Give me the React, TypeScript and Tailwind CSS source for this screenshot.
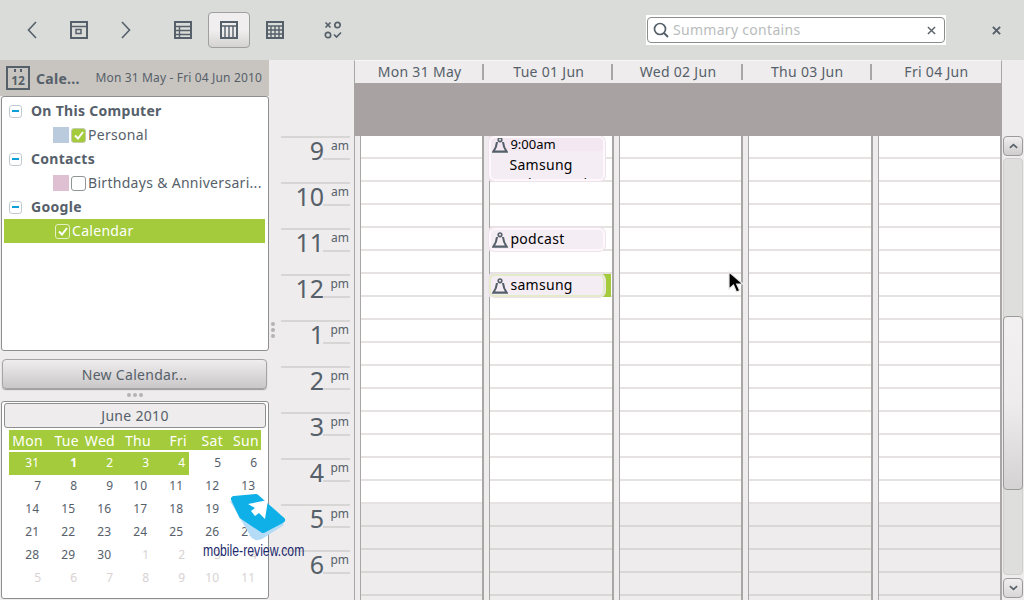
const ink = '#56606a'

const hours = [
  ['9', 'am'], ['10', 'am'], ['11', 'am'], ['12', 'pm'], ['1', 'pm'],
  ['2', 'pm'], ['3', 'pm'], ['4', 'pm'], ['5', 'pm'], ['6', 'pm'],
]

const days = ['Mon 31 May', 'Tue 01 Jun', 'Wed 02 Jun', 'Thu 03 Jun', 'Fri 04 Jun']
const weekdays = ['Mon', 'Tue', 'Wed', 'Thu', 'Fri', 'Sat', 'Sun']

const weeks = [
  [31, 1, 2, 3, 4, 5, 6],
  [7, 8, 9, 10, 11, 12, 13],
  [14, 15, 16, 17, 18, 19, 20],
  [21, 22, 23, 24, 25, 26, 27],
  [28, 29, 30, 1, 2, 3, 4],
  [5, 6, 7, 8, 9, 10, 11],
]

function Icon({ children, className }: { children: React.ReactNode; className?: string }) {
  return (
    <svg viewBox="0 0 18 18" fill="none" stroke={ink} strokeWidth="2" className={className ?? 'w-[18px] h-[18px]'}>
      {children}
    </svg>
  )
}

function Toolbar() {
  return (
    <div className="flex items-center h-[60px] bg-[#dadcd9] shrink-0 relative">
      <div className="flex items-center w-[46px] justify-end pr-[9px]">
        <svg viewBox="0 0 10 18" fill="none" stroke={ink} strokeWidth="1.6" className="w-[10px] h-[18px]">
          <path d="M9 1 1.5 9 9 17" />
        </svg>
      </div>
      <Icon className="w-[18px] h-[18px] ml-[24px]">
        <path d="M1 1h16v16H1z" />
        <path d="M1 5.5h16" strokeWidth="1.5" />
        <path d="M6 8.5h5v4H6z" strokeWidth="1.5" />
      </Icon>
      <svg viewBox="0 0 10 18" fill="none" stroke={ink} strokeWidth="1.6" className="w-[10px] h-[18px] ml-[33px]">
        <path d="M1 1l7.5 8L1 17" />
      </svg>
      <Icon className="w-[18px] h-[18px] ml-[43px]">
        <path d="M1 1h16v16H1z" />
        <path d="M1 5.5h16M1 9.5h16M1 13.5h16M5.5 5v12" strokeWidth="1.4" />
      </Icon>
      <div className="flex items-center justify-center w-[42px] h-[36px] ml-[16px] rounded-[4px] border border-[#9da09f] bg-gradient-to-b from-[#f0eeee] via-[#f0eeee] to-[#d5d2d2]">
        <Icon>
          <path d="M1 1h16v16H1z" />
          <path d="M1 5h16M5 5v12M9 5v12M13 5v12" strokeWidth="1.4" />
        </Icon>
      </div>
      <Icon className="w-[18px] h-[18px] ml-[16px]">
        <path d="M1 1h16v16H1z" />
        <path d="M1 5h16M1 9h16M1 13h16M5 5v12M9 5v12M13 5v12" strokeWidth="1.4" />
      </Icon>
      <svg viewBox="0 0 18 18" fill="none" stroke={ink} strokeWidth="1.7" className="w-[18px] h-[18px] ml-[40px]">
        <path d="M1.5 1.5l5 5M6.5 1.5l-5 5" />
        <circle cx="13.5" cy="4" r="2.7" />
        <circle cx="4" cy="14" r="2.7" />
        <path d="M10 13.5l2.5 2.5 4.5-4.5" />
      </svg>

      <div className="ml-[304px] w-[300px] h-[30px] bg-white flex items-center px-[1px]">
        <div className="flex items-center w-full h-[26px] rounded-[4px] border border-[#8a8d8c] pl-[5px] pr-[8px]">
          <svg viewBox="0 0 16 16" fill="none" stroke={ink} strokeWidth="1.7" className="w-[16px] h-[16px] shrink-0">
            <circle cx="7" cy="7" r="5.5" />
            <path d="M11 11l4 4" strokeWidth="2" />
          </svg>
          <span className="ml-[4px] text-[14px] text-[#b9bcbc] flex-1 leading-none">Summary contains</span>
          <svg viewBox="0 0 10 10" stroke="#5c6469" strokeWidth="1.6" className="w-[9px] h-[9px]">
            <path d="M1 1l8 8M9 1l-8 8" />
          </svg>
        </div>
      </div>
      <svg viewBox="0 0 10 10" stroke={ink} strokeWidth="2.2" className="w-[9px] h-[9px] ml-[46px]">
        <path d="M1 1l8 8M9 1l-8 8" />
      </svg>
    </div>
  )
}

function Expander() {
  return (
    <span className="flex items-center justify-center w-[13px] h-[13px] rounded-[3px] border border-[#c4cbd0] bg-white ml-[5px] shrink-0">
      <span className="w-[7px] h-[2px] bg-[#0d9fd6]" />
    </span>
  )
}

function Check({ on, tone }: { on?: boolean; tone: 'green' | 'plain' | 'selected' }) {
  const cls =
    tone === 'green'
      ? 'bg-[#a3cb3b] border-[#c4cdb0]'
      : tone === 'selected'
        ? 'bg-[#a3cb3b] border-[#e6f0c8]'
        : 'bg-white border-[#8f9496]'
  return (
    <span className={`flex items-center justify-center w-[15px] h-[15px] rounded-[3px] border shrink-0 ${cls}`}>
      {on && (
        <svg viewBox="0 0 12 12" fill="none" stroke="#fff" strokeWidth="2" className="w-[12px] h-[12px]">
          <path d="M2 6.5l3 3 5-6.5" />
        </svg>
      )}
    </span>
  )
}

function GroupRow({ label }: { label: string }) {
  return (
    <div className="flex items-center h-[24px]">
      <Expander />
      <span className="ml-[9px] pb-[2px] font-bold text-[14px] text-[#56606a]">{label}</span>
    </div>
  )
}

function Sidebar() {
  return (
    <div className="w-[269px] shrink-0 flex flex-col">
      <div className="flex items-center h-[36px] bg-[#c8c5c0] text-[#56606a] pl-[6px]">
        <div className="relative w-[24px] h-[24px] border-2 border-[#56606a] flex items-center justify-center font-bold text-[12px] tracking-normal leading-none pt-[5px]">
          12
          <span className="absolute left-[6px] top-[1px] w-[2px] h-[3px] bg-[#56606a]" />
          <span className="absolute left-[12px] top-[1px] w-[2px] h-[3px] bg-[#56606a]" />
        </div>
        <span className="ml-[6px] font-bold text-[14px]">Cale...</span>
        <span className="ml-auto pr-[7px] text-[12px] tracking-[0.15px]">Mon 31 May - Fri 04 Jun 2010</span>
      </div>

      <div className="ml-[1px] w-[268px] h-[255px] rounded-[3px] border border-[#8d8f90] bg-white pl-[2px] pr-[3px] pt-[2px] text-[14px] text-[#56606a]">
        <GroupRow label="On This Computer" />
        <div className="flex items-center h-[24px] pl-[49px]">
          <span className="w-[16px] h-[16px] bg-[#b9cbdd]" />
          <span className="ml-[2px]"><Check on tone="green" /></span>
          <span className="ml-[2px] pb-[2px]">Personal</span>
        </div>
        <GroupRow label="Contacts" />
        <div className="flex items-center h-[24px] pl-[49px]">
          <span className="w-[16px] h-[16px] bg-[#dfbfd2]" />
          <span className="ml-[2px]"><Check tone="plain" /></span>
          <span className="ml-[2px] pb-[2px] whitespace-nowrap">Birthdays &amp; Anniversari...</span>
        </div>
        <GroupRow label="Google" />
        <div className="flex items-center h-[24px] pl-[51px] bg-[#a3cb3b] text-white">
          <Check on tone="selected" />
          <span className="ml-[2px] pb-[2px]">Calendar</span>
        </div>
      </div>

      <button className="ml-[2px] mt-[8px] w-[265px] h-[30px] rounded-[4px] border border-[#a3a5a5] bg-gradient-to-b from-[#efeded] to-[#c9c7c7] shadow-[0_1px_1px_#9a9a9a] text-[14px] text-[#56606a]">
        New Calendar...
      </button>

      <div className="flex justify-center gap-[2px] h-[12px] items-center">
        <span className="w-[4px] h-[4px] rounded-full bg-[#b5b3b3]" />
        <span className="w-[4px] h-[4px] rounded-full bg-[#b5b3b3]" />
        <span className="w-[4px] h-[4px] rounded-full bg-[#b5b3b3]" />
      </div>

      <div className="ml-[1px] w-[268px] h-[198px] rounded-[3px] border border-[#8d8f90] bg-white px-[2px] pt-[1px] text-[#56606a]">
        <div className="h-[25px] rounded-[3px] border border-[#8d8f90] bg-[#eeecec] flex items-center justify-center text-[14px]">
          June 2010
        </div>
        <div className="ml-[5px] mt-[2px] w-[252px] h-[20px] bg-[#a3cb3b] grid grid-cols-7 text-[14px] leading-[21px] text-white text-right">
          {weekdays.map((d) => (
            <span key={d} className="pr-[2px]">{d}</span>
          ))}
        </div>
        <div className="ml-[5px] mt-[2px] w-[252px] grid grid-cols-7 text-[12px] tracking-normal leading-[22px] text-right">
          {weeks.map((week, w) =>
            week.map((n, i) => {
              const current = w === 0 && i < 5
              const muted = w === 5 || (w === 4 && i > 2)
              return (
                <span
                  key={`${w}-${i}`}
                  className={`h-[23px] ${n > 9 ? 'pr-[6px]' : 'pr-[4px]'} ${current ? 'bg-[#a3cb3b] text-white' : ''} ${muted ? 'text-[#d8d2d2]' : ''} ${current && n === 1 ? 'font-bold' : ''}`}
                >
                  {n}
                </span>
              )
            }),
          )}
        </div>
      </div>
    </div>
  )
}

function Bell() {
  return (
    <svg viewBox="0 0 16 16" fill="none" stroke={ink} strokeWidth="2.1" className="w-[16px] h-[16px] shrink-0">
      <circle cx="8" cy="2.8" r="1.8" strokeWidth="1.6" />
      <path d="M5 5Q4.6 10 1.4 14.6H14.6Q11.4 10 11 5" />
    </svg>
  )
}

function Event({ top, height, children, accent }: { top: number; height: number; children: React.ReactNode; accent?: boolean }) {
  return (
    <>
      <div className="absolute left-[-6px] w-[7px] bg-gradient-to-r from-transparent to-[#f3e8f1]" style={{ top, height }} />
      <div
        className={`absolute left-[-1px] w-[116px] overflow-hidden rounded-[6px] border-2 bg-[#f5edf4] text-black text-[14px] shadow-[0_0_0_1px_#efe2ec] ${accent ? 'border-[#e3ecc8]' : 'border-[#fcf8fb]'}`}
        style={{ top, height }}
      >
        {children}
      </div>
    </>
  )
}

function DayColumn({ index }: { index: number }) {
  return (
    <div className="relative flex-1 flex flex-col border-r-2 border-[#a9a6a6]">
      {Array.from({ length: 20 }).map((_, i) => (
        <div
          key={i}
          className={`h-[23px] shrink-0 border-b-2 ${i < 16 ? 'bg-white border-[#e6e2e2]' : 'bg-[#eeecec] border-[#d9d6d6]'}`}
        />
      ))}
      {index === 1 && (
        <>
          <Event top={0} height={45}>
            <div className="flex items-center h-[13px] bg-[#f3e8f1] pl-[1px] text-[13px] leading-none">
              <Bell />
              <span className="ml-[2px] tracking-normal">9:00am</span>
            </div>
            <div className="pl-[18px] pt-[4px] leading-[19px] whitespace-nowrap">
              Samsung
              <br />
              Galaxy Review
            </div>
          </Event>
          <Event top={92} height={23}>
            <div className="flex items-center h-full pl-[1px]">
              <Bell />
              <span className="ml-[2px] pb-[2px]">podcast</span>
            </div>
          </Event>
          <div className="absolute left-[112px] top-[138px] w-[9px] h-[23px] bg-[#a3cb3b]" />
          <Event top={138} height={23} accent>
            <div className="flex items-center h-full pl-[1px]">
              <Bell />
              <span className="ml-[2px] pb-[2px]">samsung</span>
            </div>
          </Event>
        </>
      )}
    </div>
  )
}

function Week() {
  return (
    <div className="flex-1 min-w-0 flex flex-col">
      <div className="flex h-[23px] ml-[85px] w-[648px] bg-[#eeecec] border-x border-t border-x-[#a9a6a6] border-t-[#f7f6f6] text-[14px] text-[#56606a]">
        {days.map((d, i) => (
          <div key={d} className="flex-1 flex items-center justify-center relative pb-[2px]">
            {d}
            {i < 4 && <span className="absolute right-0 top-[3px] w-[2px] h-[16px] bg-[#a9a6a6]" />}
          </div>
        ))}
      </div>
      <div className="h-[53px] ml-[85px] w-[648px] bg-[#a8a2a2] shrink-0" />

      <div className="flex flex-1 min-h-0 overflow-hidden">
        <div className="w-[85px] shrink-0 pl-[12px] pr-[4px] text-[#56606a] tracking-normal">
          {hours.map(([h, m]) => (
            <div key={h + m} className="h-[46px] border-t-2 border-[#d8d5d5] relative flex justify-end">
              <span className="absolute right-[26px] top-0 text-[25px] leading-[24px]">{h}</span>
              <span className="text-[12px] leading-none pt-[2px] pr-[1px]">{m}</span>
              <span className="absolute right-0 top-[20px] w-[27px] h-[2px] bg-[#d8d5d5]" />
            </div>
          ))}
        </div>

        <div className="w-[648px] shrink-0 flex border-l border-[#a9a6a6]">
          {days.map((d, i) => (
            <div key={d} className="flex-1 flex pl-[5px]">
              <div className="w-px bg-[#a9a6a6] shrink-0" />
              <DayColumn index={i} />
            </div>
          ))}
        </div>

        <div className="w-[21px] ml-[1px] flex flex-col">
          <div className="h-[20px] w-[20px] rounded-[4px] border border-[#9a9c9c] bg-gradient-to-b from-[#f0eeee] to-[#cfcdcd] flex items-center justify-center">
            <svg viewBox="0 0 10 6" fill="none" stroke={ink} strokeWidth="1.8" className="w-[9px] h-[6px]">
              <path d="M1 5l4-3.5L9 5" />
            </svg>
          </div>
          <div className="mt-[2px] h-[417px] w-[20px] rounded-[4px] border border-[#d0cece] bg-[#dedfdd] relative">
            <div className="absolute left-[-1px] top-[157px] w-[20px] h-[174px] rounded-[4px] border border-[#9a9c9c] bg-gradient-to-b from-[#f2f0f0] via-[#eeecec] to-[#d4d2d2]" />
          </div>
          <div className="mt-[3px] h-[20px] w-[20px] rounded-[4px] border border-[#9a9c9c] bg-gradient-to-b from-[#f0eeee] to-[#d8d6d6] flex items-center justify-center">
            <svg viewBox="0 0 10 6" fill="none" stroke={ink} strokeWidth="1.8" className="w-[9px] h-[6px]">
              <path d="M1 1l4 3.5L9 1" />
            </svg>
          </div>
        </div>
      </div>
    </div>
  )
}

export default function App() {
  return (
    <div className="relative w-[1024px] h-[600px] overflow-hidden flex flex-col bg-[#eeecec] tracking-[0.3px] font-['Noto_Sans','Open_Sans',sans-serif]">
      <Toolbar />
      <div className="flex flex-1 min-h-0">
        <Sidebar />
        <Week />
      </div>

      {/* sash grip */}
      <div className="absolute left-[271px] top-[322px] flex flex-col gap-[2px]">
        <span className="w-[4px] h-[4px] rounded-full bg-[#b5b3b3]" />
        <span className="w-[4px] h-[4px] rounded-full bg-[#b5b3b3]" />
        <span className="w-[4px] h-[4px] rounded-full bg-[#b5b3b3]" />
      </div>

      {/* watermark */}
      <svg viewBox="0 0 60 50" className="absolute left-[227px] top-[493px] w-[60px] h-[50px]">
        <path d="M3 8 L24 44 Q28 49 35 46 L57 32 L40 12Z" fill="#b5dcf6" />
        <path d="M7 6 L29 4 L55 27 L36 37 L15 23 Z" fill="#0fb0e8" stroke="#0fb0e8" strokeWidth="6" strokeLinejoin="round" />
        <path d="M21 11 L41 7 L38 26 L32 20 L28 23 L24 18 L28 15 Z" fill="#fff" />
      </svg>
      <div className="absolute left-[203px] top-[541px] text-[17px] leading-[20px] tracking-normal text-[#1d2a6e] font-['Liberation_Sans',sans-serif] scale-x-[0.72] origin-left whitespace-nowrap">
        mobile-review.com
      </div>

      {/* pointer */}
      <svg viewBox="0 0 18 24" className="absolute left-[727px] top-[270px] w-[18px] h-[24px]">
        <path d="M2 2v17l4.5-4 3 7 3.2-1.4-3-6.6H16z" fill="#000" stroke="#e8e8e8" strokeWidth="1.2" />
      </svg>
    </div>
  )
}
